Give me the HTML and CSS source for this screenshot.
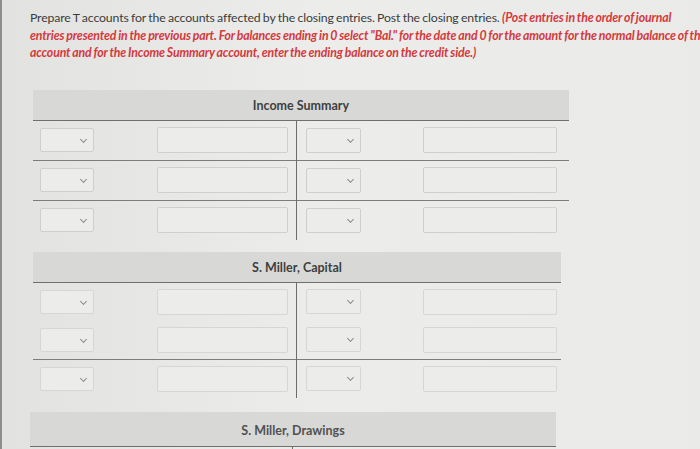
FILE: index.html
```html
<!DOCTYPE html>
<html>
<head>
<meta charset="utf-8">
<link rel="stylesheet" href="styles.css">
</head>
<body>
<div class="page">
  <p class="intro">Prepare T accounts for the accounts affected by the closing entries. Post the closing entries. <span class="note">(Post entries in the order of journal<br>entries presented in the previous part. For balances ending in 0 select "Bal." for the date and 0 for the amount for the normal balance of the<br>account and for the Income Summary account, enter the ending balance on the credit side.)</span></p>

  <div class="taccount t1">
    <div class="thead">Income Summary</div>
    <div class="tbody">
      <div class="side left">
        <div class="row lined"><span class="sel"></span><span class="inp"></span></div>
        <div class="row lined"><span class="sel"></span><span class="inp"></span></div>
        <div class="row"><span class="sel"></span><span class="inp"></span></div>
      </div>
      <div class="side right">
        <div class="row lined"><span class="sel"></span><span class="inp"></span></div>
        <div class="row lined"><span class="sel"></span><span class="inp"></span></div>
        <div class="row"><span class="sel"></span><span class="inp"></span></div>
      </div>
    </div>
  </div>

  <div class="taccount t2">
    <div class="thead">S. Miller, Capital</div>
    <div class="tbody">
      <div class="side left">
        <div class="row"><span class="sel"></span><span class="inp"></span></div>
        <div class="row lined"><span class="sel"></span><span class="inp"></span></div>
        <div class="row"><span class="sel"></span><span class="inp"></span></div>
      </div>
      <div class="side right">
        <div class="row"><span class="sel"></span><span class="inp"></span></div>
        <div class="row lined"><span class="sel"></span><span class="inp"></span></div>
        <div class="row"><span class="sel"></span><span class="inp"></span></div>
      </div>
    </div>
  </div>

  <div class="taccount t3">
    <div class="thead">S. Miller, Drawings</div>
    <div class="tbody">
      <div class="side left"><div class="row"></div></div>
      <div class="side right"><div class="row"></div></div>
    </div>
  </div>
</div>
</body>
</html>
```
FILE: styles.css
```css
html, body {
  margin: 0;
  padding: 0;
  background: #e8e9e6;
}
body {
  width: 700px;
  height: 449px;
  overflow: hidden;
  font-family: Lato, "Open Sans", sans-serif;
}
.page {
  padding: 9px 0 0 28px;
  border-left: 2px solid #8e8f8c;
  height: 449px;
  box-sizing: border-box;
  background: linear-gradient(90deg, #e2e3e0 0%, #ecedea 45%, #eaebe8 100%);
  overflow: hidden;
}
.intro {
  margin: 0;
  white-space: nowrap;
  font-size: 12.3px;
  line-height: 17.5px;
  color: #3b3c3d;
  letter-spacing: -0.15px;
  word-spacing: -0.6px;
}
.note {
  color: #d4393e;
  font-weight: 700;
  font-style: italic;
}
.taccount {
  margin-left: 3px;
  width: 536px;
}
.t1 { margin-top: 28px; }
.t2 { margin-top: 12px; width: 528px; }
.t3 { margin-top: 14px; margin-left: 0; width: 526px; }
.thead {
  height: 31px;
  background: #d8d9d6;
  border-bottom: 1.5px solid #6f706e;
  font-size: 12.5px;
  font-weight: 700;
  color: #3e3f40;
  display: flex;
  align-items: center;
  justify-content: center;
  padding-top: 2px;
  box-sizing: border-box;
}
.t3 .thead { height: 35px; padding-top: 4px; color: #505152; }
.tbody {
  display: grid;
  grid-template-columns: 264px 1fr;
}
.t3 .tbody { grid-template-columns: 263px 1fr; }
.side.left { border-right: 1px solid #6c6d6b; }
.row {
  height: 39px;
  display: flex;
  align-items: center;
}
.row.lined { border-bottom: 1px solid #7d7e7c; }
.t2 .row { height: 38px; }
.sel, .inp {
  display: block;
  height: 24px;
  border: 1px solid #cfd0cd;
  border-radius: 2px;
  background: #ecedea;
  box-sizing: border-box;
  position: relative;
}
.left .sel { width: 54px; margin-left: 7px; }
.left .inp { width: 131px; margin-left: 63px; height: 26px; }
.right .sel { width: 55px; margin-left: 9px; height: 25px; }
.right .inp { width: 134px; margin-left: 62px; height: 26px; }
.sel::after {
  content: "";
  position: absolute;
  right: 7px;
  top: 8px;
  width: 4px;
  height: 4px;
  border-right: 1.5px solid #8b8c8e;
  border-bottom: 1.5px solid #8b8c8e;
  transform: rotate(45deg);
}
.t2 .sel, .t2 .inp { border-color: #d6d7d4; }
```
